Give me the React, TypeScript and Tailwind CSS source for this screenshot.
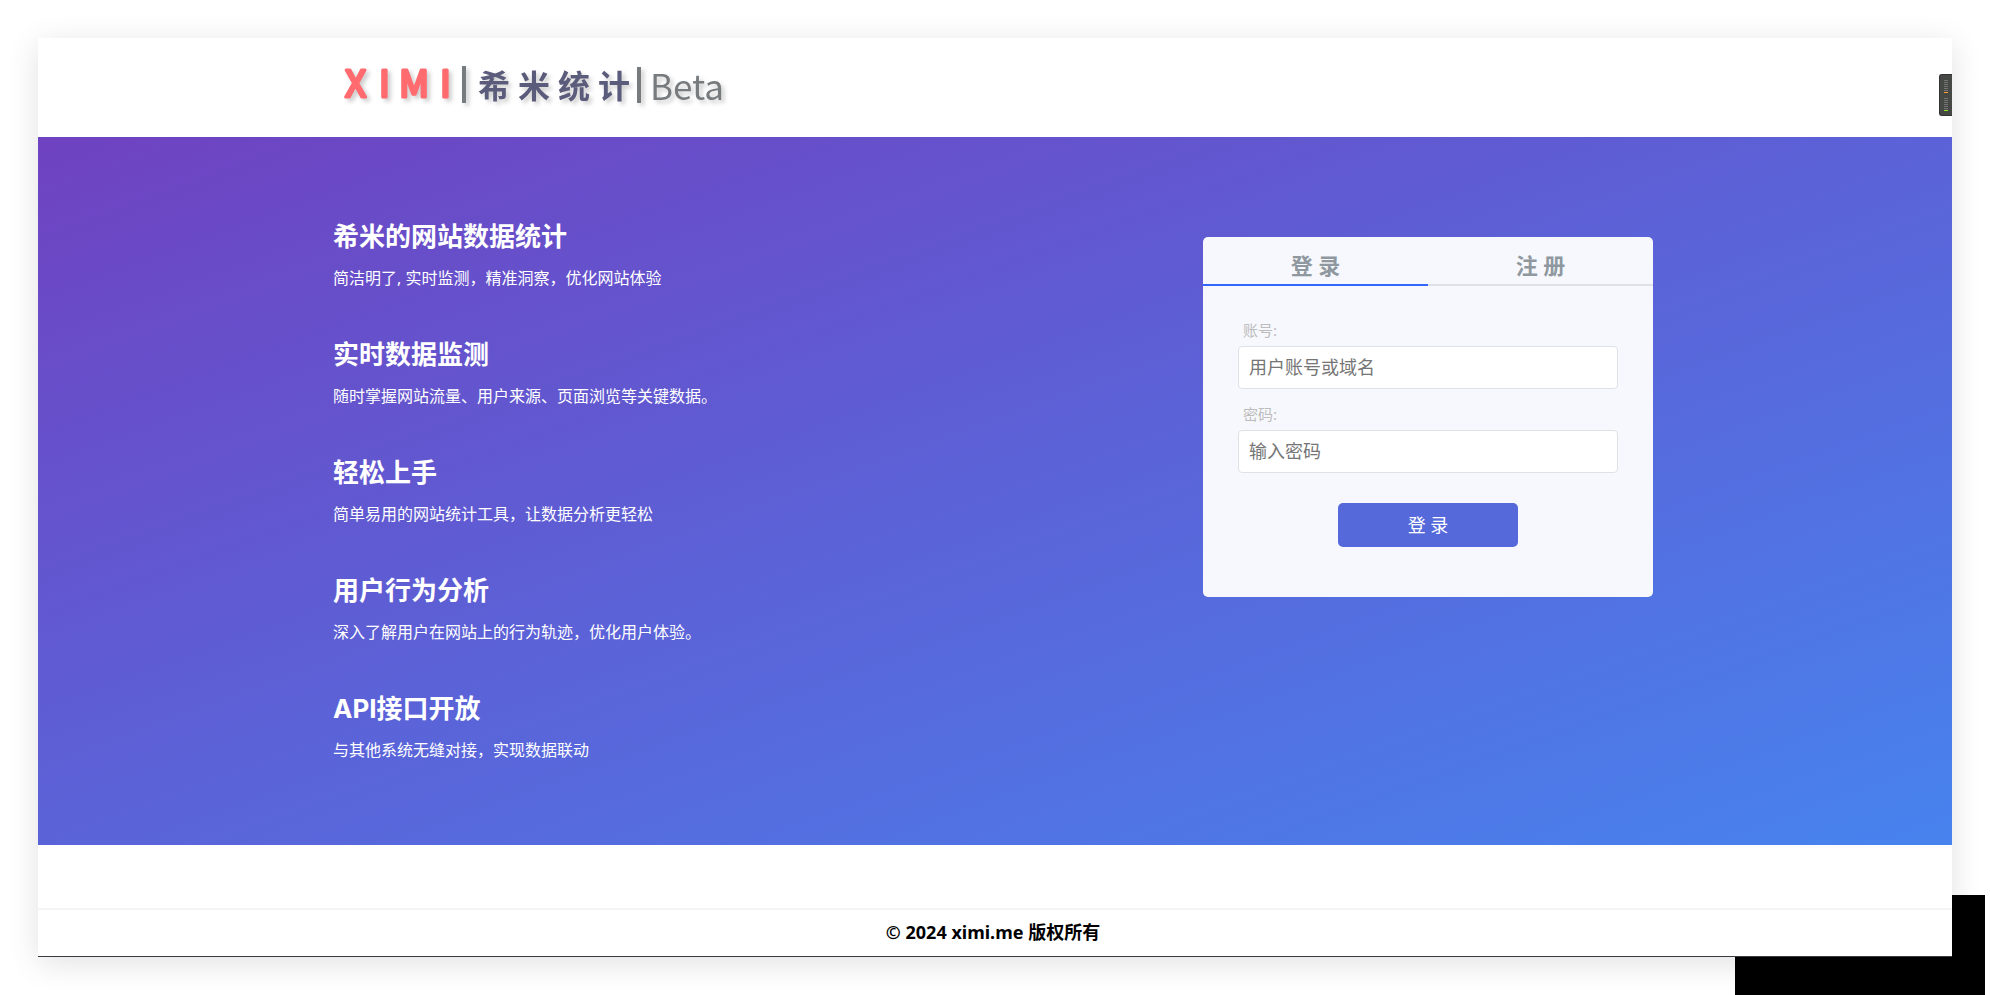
import { useState } from 'react'
import type { ReactNode } from 'react'

const FEATURES = [
  { title: '希米的网站数据统计', desc: '简洁明了, 实时监测，精准洞察，优化网站体验' },
  { title: '实时数据监测', desc: '随时掌握网站流量、用户来源、页面浏览等关键数据。' },
  { title: '轻松上手', desc: '简单易用的网站统计工具，让数据分析更轻松' },
  { title: '用户行为分析', desc: '深入了解用户在网站上的行为轨迹，优化用户体验。' },
  { title: 'API接口开放', desc: '与其他系统无缝对接，实现数据联动' },
]

const TABS = [
  { id: 'login', label: '登 录' },
  { id: 'register', label: '注 册' },
]

function Container({ children }: { children: ReactNode }) {
  return <div className="mx-auto w-full max-w-[1320px]">{children}</div>
}

function Logo() {
  return (
    <svg
      className="h-[66px] w-[400px] overflow-visible font-['Noto_Sans_CJK_SC',sans-serif] [filter:drop-shadow(3px_3px_2px_rgba(0,0,0,0.2))]"
      viewBox="0 0 400 66"
      role="img"
      aria-label="XIMI 希米统计 Beta"
    >
      <text
        x="12 46 66 107"
        y="45"
        fontSize="37"
        fontWeight="400"
        fill="#ff6b6e"
        stroke="#ff6b6e"
        strokeWidth="3"
        strokeLinejoin="round"
      >
        XIMI
      </text>
      <rect x="129" y="14" width="4" height="37" fill="#777b7e" />
      <text x="145 185 225 265" y="46" fontSize="32" fontWeight="700" fill="#5b5b7b">
        希米统计
      </text>
      <rect x="304" y="15" width="4" height="36" fill="#777b7e" />
      <text x="317" y="48" fontSize="35" fill="#777b7e">
        Beta
      </text>
    </svg>
  )
}

function TickGroup({ last }: { last: string }) {
  return (
    <div className="flex flex-col gap-px">
      {[0, 1, 2, 3, 4, 5].map((i) => (
        <span key={i} className="h-px w-1 bg-[#747474]" />
      ))}
      <span className={`h-px w-1 ${last}`} />
    </div>
  )
}

function SideHandle() {
  return (
    <div
      className="absolute right-0 top-9 flex h-[42px] w-[13px] flex-col items-center justify-center gap-[5px] rounded-l-[3px] border border-r-0 border-[#333] bg-[#464846]"
      aria-hidden
    >
      <TickGroup last="bg-[#ffa030]" />
      <TickGroup last="bg-[#8fe81f]" />
    </div>
  )
}

interface FieldProps {
  id: string
  label: string
  type: string
  placeholder: string
}

function Field({ id, label, type, placeholder }: FieldProps) {
  return (
    <div className="flex flex-col">
      <label htmlFor={id} className="px-[5px] pb-1 text-[15px] leading-6 text-[#bcbcbc]">
        {label}
      </label>
      <input
        id={id}
        type={type}
        placeholder={placeholder}
        className="h-[43px] w-full rounded border border-[#dee2e6] bg-white px-[10px] pb-[2px] text-[18px] text-[#333] placeholder:text-[#757575] focus:outline-none"
      />
    </div>
  )
}

function LoginCard() {
  const [tab, setTab] = useState('login')

  return (
    <div className="mt-[41px] flex w-[450px] shrink-0 flex-col self-start rounded-[5px] bg-[#f7f8fd]">
      <div className="flex" role="tablist">
        {TABS.map(({ id, label }) => (
          <button
            key={id}
            type="button"
            role="tab"
            aria-selected={tab === id}
            onClick={() => setTab(id)}
            className={`h-[49px] flex-1 border-b-2 pt-2 text-[22px] leading-8 font-bold text-[#8f989f] ${
              tab === id ? 'border-[#3366ff]' : 'border-[#dee2e6]'
            }`}
          >
            {label}
          </button>
        ))}
      </div>
      <form className="flex flex-col px-[35px] pt-8 pb-[50px]" onSubmit={(e) => e.preventDefault()}>
        <div className="flex flex-col gap-[13px]">
          <Field id="account" label="账号:" type="text" placeholder="用户账号或域名" />
          <Field id="password" label="密码:" type="password" placeholder="输入密码" />
        </div>
        <button
          type="submit"
          className="mt-[30px] h-11 w-[180px] self-center rounded-[5px] bg-[#5569da] text-[18px] text-white"
        >
          登 录
        </button>
      </form>
    </div>
  )
}

export default function App() {
  return (
    <div className="relative min-h-screen overflow-hidden bg-white p-[38px] font-['Noto_Sans','Noto_Sans_CJK_SC',sans-serif]">
      <div className="absolute right-[5px] bottom-0 h-[100px] w-[250px] bg-black" aria-hidden />
      <div className="relative border-b border-[#3c3a40] bg-white shadow-[0_6px_30px_rgba(0,0,0,0.12)]">
        <header className="pt-[14px] pr-1 pb-[19px]">
          <Container>
            <Logo />
          </Container>
        </header>
        <SideHandle />

        <main className="bg-linear-[160deg,#6f42c1,#4783ee] py-[59px] pr-1">
          <Container>
            <div className="flex justify-between">
              <div className="flex flex-col">
                {FEATURES.map((item) => (
                  <section key={item.title} className="pt-[25px] pb-6 text-white">
                    <h2 className="font-['Inter','Noto_Sans_CJK_SC',sans-serif] text-[26px] leading-8 font-bold">
                      {item.title}
                    </h2>
                    <p className="mt-[13px] text-base leading-6">{item.desc}</p>
                  </section>
                ))}
              </div>
              <LoginCard />
            </div>
          </Container>
        </main>

        <footer className="mt-[63px] border-t-2 border-[#f4f4f6] pt-[10px] pr-1 pb-3 text-center text-[18px] leading-6 font-bold text-black">
          © 2024 ximi.me 版权所有
        </footer>
      </div>
    </div>
  )
}
